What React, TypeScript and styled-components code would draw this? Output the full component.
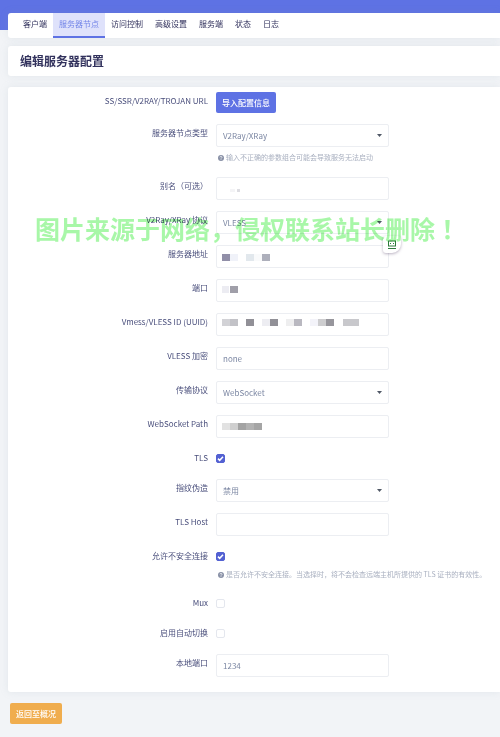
import React, { useId } from "react";
import styled, { createGlobalStyle, css } from "styled-components";

const GlobalStyle = createGlobalStyle`
  *, *::before, *::after { box-sizing: border-box; }
  body {
    margin: 0;
    background: #f2f4f7;
    color: #4a4f7c;
    font-family: "Noto Sans CJK SC", sans-serif;
    font-size: 8px;
    line-height: 16px;
    overflow-x: hidden;
  }
  button, input, select { font: inherit; }
`;

const Page = styled.div`
  position: relative;
  padding: 13px 0 13px 8px;
  background: linear-gradient(#5e72e4, #5e72e4) 0 0 / 100% 30px no-repeat;
`;

const Card = styled.section`
  background: #fff;
  border-radius: 3px 0 0 3px;
  box-shadow: 0 0 8px rgba(136, 152, 170, 0.15);
`;

const Tabs = styled(Card).attrs({ as: "nav" })`
  display: flex;
  padding-left: 9px;
`;

const Tab = styled.a<{ $active?: boolean }>`
  height: 25px;
  padding: 3px 6px 0;
  color: #32325d;
  text-decoration: none;
  white-space: nowrap;
  border-bottom: 2px solid transparent;
  ${(p) =>
    p.$active &&
    css`
      color: #7486e8;
      background: #dfe2fb;
      border-bottom-color: #5e72e4;
    `}
`;

const TitleCard = styled(Card)`
  margin-top: 8px;
  padding: 7px 12px;
`;

const Title = styled.h1`
  margin: 0;
  color: #32325d;
  font-size: 12px;
  line-height: 16px;
  font-weight: 700;
`;

const FormCard = styled(Card).attrs({ as: "form" })`
  display: flex;
  flex-direction: column;
  gap: 11px;
  margin-top: 11px;
  padding: 5px 8px 15px 0;
`;

const Row = styled.div`
  display: grid;
  grid-template-columns: 200px minmax(0, 1fr);
  column-gap: 8px;
`;

const Label = styled.label`
  padding-top: 1px;
  text-align: right;
  white-space: nowrap;
`;

const Field = styled.div`
  position: relative;
  max-width: 173px;
`;

const controlStyle = css`
  display: block;
  width: 100%;
  height: 23px;
  padding: 0 6px;
  color: #7c87a3;
  background-color: #fff;
  border: 1px solid #eceef2;
  border-radius: 2px;
  outline: none;
`;

const TextInput = styled.input`
  ${controlStyle}
`;

const Select = styled.select`
  ${controlStyle}
  appearance: none;
  background-image: url("data:image/svg+xml,%3Csvg xmlns='http://www.w3.org/2000/svg' viewBox='0 0 5 3'%3E%3Cpath d='M0 0h5L2.5 3z' fill='%23505866'/%3E%3C/svg%3E");
  background-repeat: no-repeat;
  background-position: right 6px center;
  background-size: 5px 3px;
`;

const CheckCell = styled.div`
  display: flex;
  align-items: center;
  height: 19px;
`;

const Checkbox = styled.input.attrs({ type: "checkbox" })`
  appearance: none;
  width: 9px;
  height: 9px;
  margin: 0;
  background: #fff;
  border: 1px solid #e4e7ee;
  border-radius: 2px;
  &:checked {
    border-color: #5361d2;
    background: #5361d2
      url("data:image/svg+xml,%3Csvg xmlns='http://www.w3.org/2000/svg' viewBox='0 0 7 7'%3E%3Cpath d='M1 3.6l1.7 1.7L6 1.8' fill='none' stroke='white' stroke-width='1.5'/%3E%3C/svg%3E")
      center / 7px 7px no-repeat;
  }
`;

const Help = styled.p<{ $spaced?: boolean }>`
  display: flex;
  align-items: center;
  gap: 2px;
  margin: ${(p) => (p.$spaced ? "2px" : "0")} 0 0 2px;
  color: #a9b0c0;
  font-size: 7px;
  line-height: 17px;
  white-space: nowrap;
`;

const Button = styled.button<{ $tone: "primary" | "warning" }>`
  height: 21px;
  padding: 0 6px;
  color: #fff;
  font-weight: 500;
  line-height: 16px;
  white-space: nowrap;
  border: 0;
  border-radius: 2px;
  background: ${(p) => (p.$tone === "primary" ? "#5e72e4" : "#f0ad4e")};
`;

const Footer = styled.footer`
  padding: 11px 2px 0;
`;

const MosaicSvg = styled.svg`
  position: absolute;
  left: 0;
  top: 0;
  width: 173px;
  height: 23px;
  pointer-events: none;
`;

const Watermark = styled.div`
  position: absolute;
  left: 35px;
  top: 210px;
  color: #a8f7a8;
  font-family: "Noto Sans CJK SC", sans-serif;
  font-size: 25px;
  line-height: 36px;
  font-weight: 700;
  white-space: nowrap;
  pointer-events: none;
  mix-blend-mode: multiply;
`;

const CenteredMark = styled.span`
  font-family: "Noto Sans CJK TC", sans-serif;
`;

const Bubble = styled.button`
  position: absolute;
  right: -12px;
  top: -9px;
  display: grid;
  place-items: center;
  width: 18px;
  height: 17px;
  padding: 0;
  background: #fff;
  border: 0;
  border-radius: 3px 3px 9px 3px;
  box-shadow: 0 1px 3px rgba(80, 60, 100, 0.4);
`;

type Block = [x: number, width: number, color: string];

const Mosaic = ({ blocks, y, height = 7 }: { blocks: Block[]; y: number; height?: number }) => (
  <MosaicSvg viewBox="0 0 173 23" aria-hidden="true">
    {blocks.map(([x, width, color]) => (
      <rect key={x} x={x} y={y} width={width} height={height} fill={color} />
    ))}
  </MosaicSvg>
);

const HelpIcon = () => (
  <svg width="6" height="6" viewBox="0 0 12 12" aria-hidden="true">
    <circle cx="6" cy="6" r="6" fill="#8890a6" />
    <path d="M4 4.6C4 2.2 8 2.3 8 4.6 8 6 6 5.9 6 7.4M6 8.6v1.4" fill="none" stroke="#fff" strokeWidth="1.5" />
  </svg>
);

const TextRow = ({
  label,
  value = "",
  children,
}: {
  label: string;
  value?: string;
  children?: React.ReactNode;
}) => {
  const id = useId();
  return (
    <Row>
      <Label htmlFor={id}>{label}</Label>
      <Field>
        <TextInput id={id} defaultValue={value} />
        {children}
      </Field>
    </Row>
  );
};

const SelectRow = ({ label, value, help }: { label: string; value: string; help?: string }) => {
  const id = useId();
  return (
    <Row>
      <Label htmlFor={id}>{label}</Label>
      <div>
        <Field>
          <Select id={id}>
            <option>{value}</option>
          </Select>
        </Field>
        {help && (
          <Help $spaced>
            <HelpIcon />
            {help}
          </Help>
        )}
      </div>
    </Row>
  );
};

const CheckRow = ({ label, checked, help }: { label: string; checked?: boolean; help?: string }) => {
  const id = useId();
  return (
    <Row>
      <Label htmlFor={id}>{label}</Label>
      <div>
        <CheckCell>
          <Checkbox id={id} defaultChecked={checked} />
        </CheckCell>
        {help && (
          <Help>
            <HelpIcon />
            {help}
          </Help>
        )}
      </div>
    </Row>
  );
};

const tabs = ["客户端", "服务器节点", "访问控制", "高级设置", "服务端", "状态", "日志"];

export default function App() {
  return (
    <Page>
      <GlobalStyle />
      <Tabs>
        {tabs.map((tab) => (
          <Tab key={tab} href="#" $active={tab === "服务器节点"}>
            {tab}
          </Tab>
        ))}
      </Tabs>
      <TitleCard>
        <Title>编辑服务器配置</Title>
      </TitleCard>
      <FormCard>
        <Row>
          <Label htmlFor="import">SS/SSR/V2RAY/TROJAN URL</Label>
          <div>
            <Button id="import" type="button" $tone="primary">
              导入配置信息
            </Button>
          </div>
        </Row>
        <SelectRow label="服务器节点类型" value="V2Ray/XRay" help="输入不正确的参数组合可能会导致服务无法启动" />
        <TextRow label="别名（可选）">
          <Mosaic y={12} height={3} blocks={[[14, 5, "#f4f4f6"], [21, 3, "#dddde2"]]} />
        </TextRow>
        <SelectRow label="V2Ray/XRay 协议" value="VLESS" />
        <TextRow label="服务器地址">
          <Mosaic
            y={9}
            blocks={[[6, 8, "#918fa8"], [14, 8, "#f0f2f9"], [30, 8, "#e2e8ed"], [38, 8, "#f9fafb"], [46, 8, "#adafbb"]]}
          />
          <Bubble type="button" aria-label="自动填充">
            <svg width="10" height="10" viewBox="0 0 10 10" fill="none" stroke="#2c7a3a" aria-hidden="true">
              <rect x="1.5" y="1" width="7" height="5" />
              <path d="M3 3.5h1M6 3.5h1M1 8.5h8" />
            </svg>
          </Bubble>
        </TextRow>
        <TextRow label="端口">
          <Mosaic y={7} blocks={[[6, 7, "#ececf2"], [14, 8, "#a09fa9"]]} />
        </TextRow>
        <TextRow label="Vmess/VLESS ID (UUID)">
          <Mosaic
            y={6}
            blocks={[
              [6, 8, "#d2d2d6"],
              [14, 8, "#c2c2c7"],
              [30, 8, "#919097"],
              [46, 8, "#ededf2"],
              [54, 8, "#919097"],
              [70, 8, "#eeeeef"],
              [78, 8, "#b9b8c0"],
              [94, 8, "#f3f3f9"],
              [102, 8, "#cdcdcf"],
              [110, 8, "#97969c"],
              [127, 16, "#c8c8cc"],
            ]}
          />
        </TextRow>
        <TextRow label="VLESS 加密" value="none" />
        <SelectRow label="传输协议" value="WebSocket" />
        <TextRow label="WebSocket Path">
          <Mosaic
            y={8}
            blocks={[[6, 8, "#e2e2e2"], [14, 8, "#cfcfcf"], [22, 8, "#a3a3a3"], [30, 8, "#b2b2b2"], [38, 8, "#a5a5a5"]]}
          />
        </TextRow>
        <CheckRow label="TLS" checked />
        <SelectRow label="指纹伪造" value="禁用" />
        <TextRow label="TLS Host" />
        <CheckRow
          label="允许不安全连接"
          checked
          help="是否允许不安全连接。当选择时，将不会检查远端主机所提供的 TLS 证书的有效性。"
        />
        <CheckRow label="Mux" />
        <CheckRow label="启用自动切换" />
        <TextRow label="本地端口" value="1234" />
      </FormCard>
      <Footer>
        <Button type="button" $tone="warning">
          返回至概况
        </Button>
      </Footer>
      <Watermark>
        图片来源于网络，侵权联系站长删除<CenteredMark>！</CenteredMark>
      </Watermark>
    </Page>
  );
}
